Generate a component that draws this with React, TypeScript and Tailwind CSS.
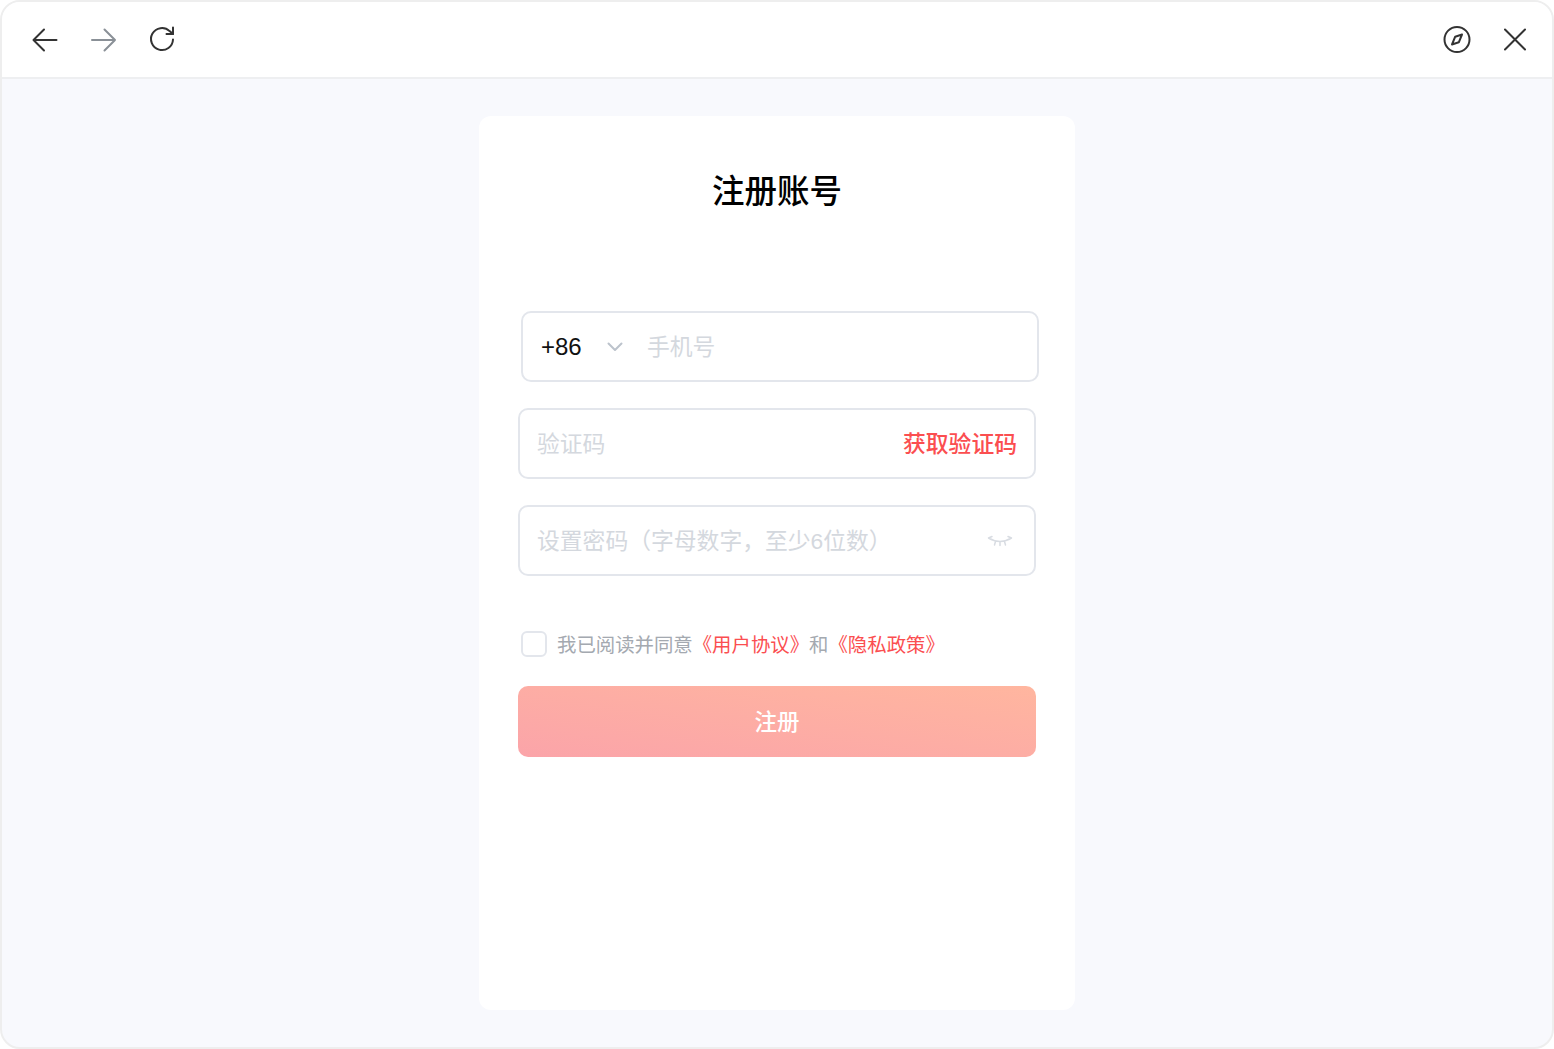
const font = "font-['Liberation_Sans','Noto_Sans_CJK_SC',sans-serif]";

function Field({ className = "", children }: { className?: string; children: React.ReactNode }) {
  return (
    <div className={`flex h-[71px] w-[518px] items-center rounded-[10px] border-2 border-[#e3e6ec] bg-white ${className}`}>
      {children}
    </div>
  );
}

export default function App() {
  return (
    <div className={`${font} flex h-[1049px] w-[1554px] flex-col overflow-hidden rounded-[20px] border-2 border-[#eeeeee] bg-[#f8f9fd]`}>
      <header className="flex h-[77px] shrink-0 items-center justify-between border-b-2 border-[#eeeff1] bg-white pl-[28px] pr-[22px]">
        <div className="flex items-center">
          <svg width="30" height="30" viewBox="0 0 30 30" fill="none" stroke="#333" strokeWidth="2" strokeLinecap="round" strokeLinejoin="round">
            <path d="M26.500 15H3.500M14 4.500 3.500 15 14 25.500" />
          </svg>
          <svg className="ml-[29px]" width="30" height="30" viewBox="0 0 30 30" fill="none" stroke="#8a9097" strokeWidth="2" strokeLinecap="round" strokeLinejoin="round">
            <path d="M3 15h23M15.500 4.500 26 15 15.500 25.500" />
          </svg>
          <svg className="ml-[29px]" width="30" height="30" viewBox="0 0 30 30" fill="none" stroke="#333" strokeWidth="2" strokeLinecap="round" strokeLinejoin="round">
            <path d="M25 14.500a11 11 0 1 1-3.400-8.400L25 9" />
            <path d="M25 2.500V9h-6.500" />
          </svg>
        </div>
        <div className="flex items-center gap-[28px]">
          <svg width="30" height="30" viewBox="0 0 30 30" fill="none" stroke="#333" strokeWidth="2" strokeLinecap="round" strokeLinejoin="round">
            <circle cx="15" cy="14.500" r="12.500" />
            <path d="M20 9.500l-6.800 2.200L10 19.500l6.800-2.200z" />
          </svg>
          <svg width="30" height="30" viewBox="0 0 30 30" fill="none" stroke="#333" strokeWidth="2" strokeLinecap="round">
            <path d="M5 4.500l20 20M25 4.500 5 24.500" />
          </svg>
        </div>
      </header>

      <main className="flex flex-1 justify-center pt-[37px]">
        <div className="flex h-[894px] w-[596px] flex-col rounded-[12px] bg-white px-[39px]">
          <h1 className="mt-[54px] h-[44px] text-center text-[32.500px] font-medium leading-[44px] text-black">注册账号</h1>

          <Field className="ml-[3px] mt-[97px] pl-[18px]">
            <span className="w-[66px] text-[24px] text-[#111]">+86</span>
            <svg width="16" height="10" viewBox="0 0 16 10" fill="none" stroke="#bcc3cc" strokeWidth="2" strokeLinecap="round" strokeLinejoin="round">
              <path d="M1.500 1.500 8 8l6.500-6.500" />
            </svg>
            <span className="ml-[24px] pt-[2px] text-[22.800px] text-[#d4d8de]">手机号</span>
          </Field>

          <Field className="mt-[26px] justify-between px-[17px]">
            <span className="pt-[2px] text-[22.800px] text-[#d4d8de]">验证码</span>
            <span className="pt-[2px] text-[22.800px] font-medium text-[#fb4e50]">获取验证码</span>
          </Field>

          <Field className="mt-[26px] justify-between pl-[17px] pr-[21px]">
            <span className="whitespace-nowrap pt-[2px] text-[22.800px] text-[#d4d8de]">设置密码（字母数字，至少6位数）</span>
            <svg width="26" height="12" viewBox="0 0 26 12" fill="none" stroke="#d8dce2" strokeWidth="1.500" strokeLinecap="round">
              <path d="M1.500 3c7 4.500 16 4.500 23 0M1.500 3 5 1.500M24.500 3 21 1.500M8.500 6.500 7.500 10M13 7v3.500M17.500 6.500l1 3.500" />
            </svg>
          </Field>

          <div className="ml-[3px] mt-[54px] flex h-[27px] items-center">
            <span className="h-[26px] w-[26px] rounded-[6px] border-2 border-[#e3e6ec] bg-white" />
            <p className="ml-[10px] whitespace-nowrap pt-[4px] text-[19.400px] text-[#a4a9b0]">
              我已阅读并同意<span className="text-[#fb4e50]">《用户协议》</span>和<span className="text-[#fb4e50]">《隐私政策》</span>
            </p>
          </div>

          <button className="mt-[29px] h-[71px] w-[518px] rounded-[10px] bg-gradient-to-tr from-[#fba4a9] to-[#ffb69f] pt-[2px] text-[22.500px] font-medium text-white">
            注册
          </button>
        </div>
      </main>
    </div>
  );
}
